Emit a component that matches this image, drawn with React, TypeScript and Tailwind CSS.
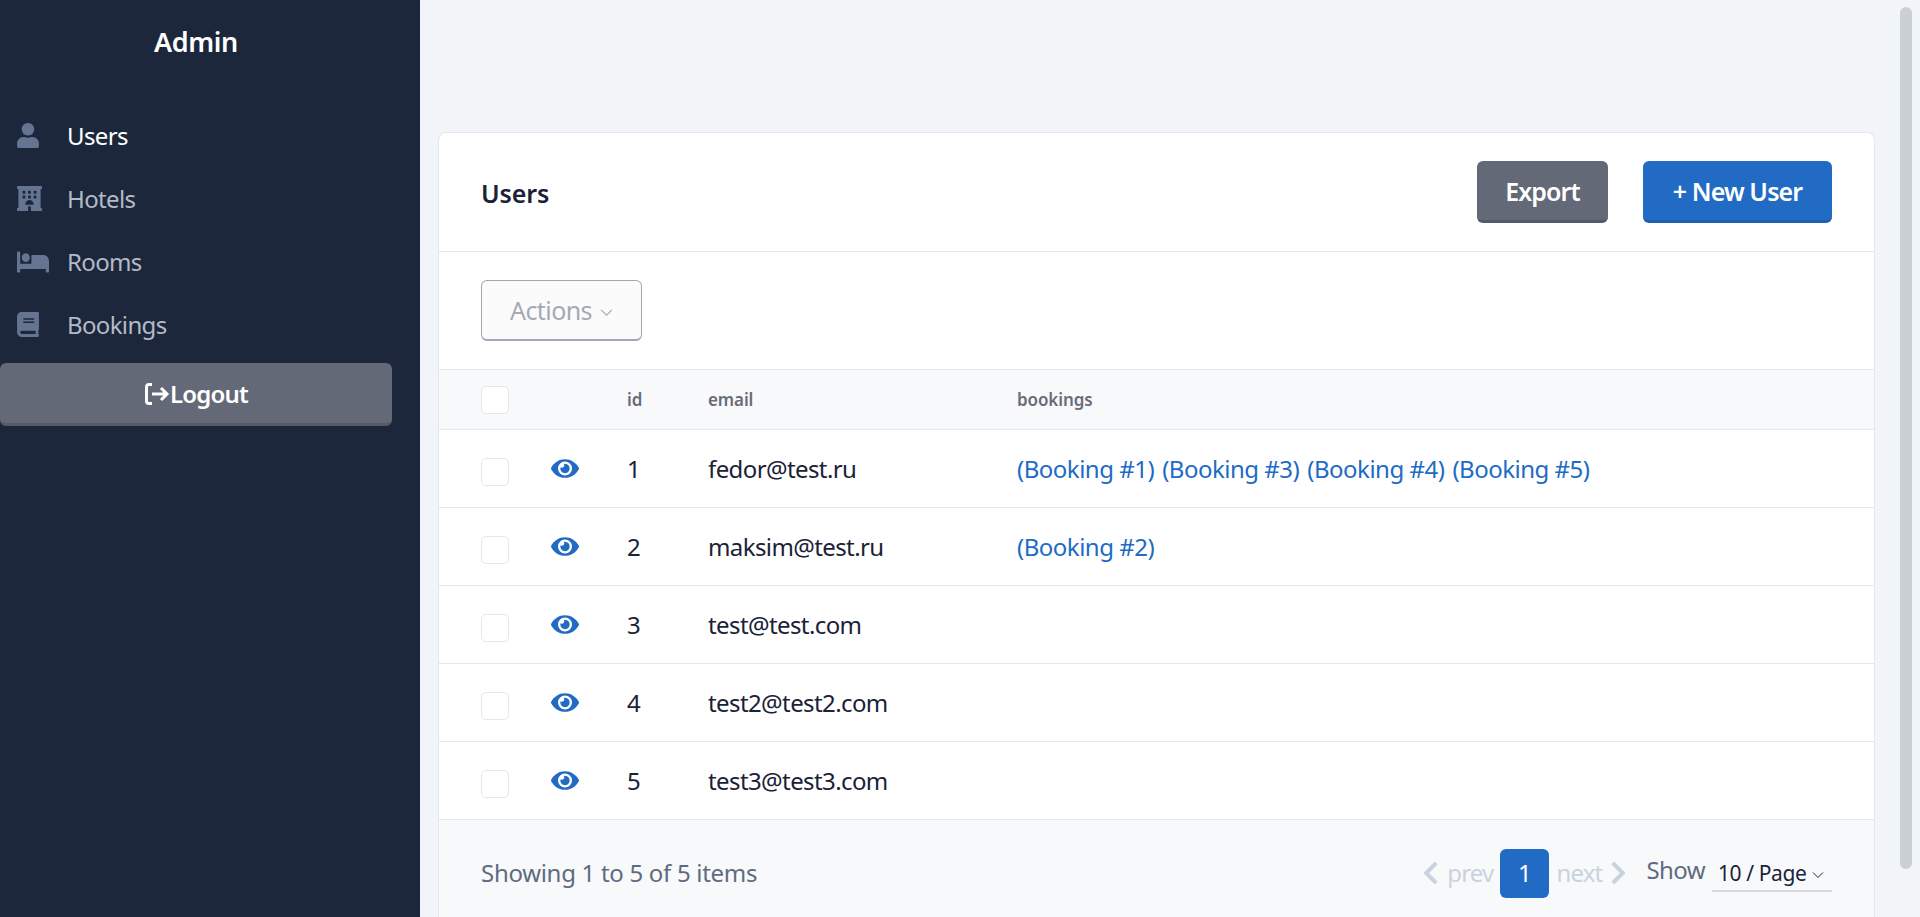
import React from 'react';
import { FaUser, FaHotel, FaBed, FaBook, FaEye, FaChevronLeft, FaChevronRight } from 'react-icons/fa';

const navItems = [
  { label: 'Users', icon: FaUser, active: true, iconClass: 'w-[22px] h-[25px]', stretch: false },
  { label: 'Hotels', icon: FaHotel, active: false, iconClass: 'w-[25px] h-[25px]', stretch: true },
  { label: 'Rooms', icon: FaBed, active: false, iconClass: 'w-[32px] h-[28px]', stretch: true },
  { label: 'Bookings', icon: FaBook, active: false, iconClass: 'w-[22px] h-[25px]', stretch: false },
];

const users = [
  { id: 1, email: 'fedor@test.ru', bookings: ['(Booking #1)', '(Booking #3)', '(Booking #4)', '(Booking #5)'] },
  { id: 2, email: 'maksim@test.ru', bookings: ['(Booking #2)'] },
  { id: 3, email: 'test@test.com', bookings: [] },
  { id: 4, email: 'test2@test2.com', bookings: [] },
  { id: 5, email: 'test3@test3.com', bookings: [] },
];

const Checkbox = () => (
  <div className="w-[28px] h-[28px] rounded-[5px] bg-white border border-[#e5e7eb]" />
);

const SmallChevron = ({ className }: { className: string }) => (
  <svg viewBox="0 0 12 8" fill="none" stroke="currentColor" strokeWidth="1" className={className}>
    <path d="M1 1.5l5 5 5-5" />
  </svg>
);

export default function App() {
  return (
    <div className="relative flex h-screen overflow-hidden bg-[#f1f4f9] font-['Noto_Sans','Open_Sans',sans-serif] text-[#1a2238]">
      <aside className="w-[420px] shrink-0 bg-[#1c273c]">
        <div className="h-[104px] pt-[22px] text-center text-[27px] leading-[40px] font-semibold text-white tracking-[-0.4px] pr-[28px]">
          Admin
        </div>
        <nav>
          {navItems.map(item => (
            <div key={item.label} className="flex items-center h-[63px] pl-[17px]">
              <div className="flex w-[50px] shrink-0">
                <item.icon
                  className={`${item.iconClass} text-[#657591]`}
                  preserveAspectRatio={item.stretch ? 'none' : undefined}
                />
              </div>
              <span className={`text-[24px] tracking-[-0.65px] ${item.active ? 'text-white' : 'text-[#b4bac6]'}`}>
                {item.label}
              </span>
            </div>
          ))}
        </nav>
        <button className="flex items-center justify-center w-[392px] h-[63px] mt-[7px] pt-[2px] rounded-[6px] bg-[#636976] border-b-[3px] border-[#545a67] text-white text-[24px] font-semibold tracking-[-0.8px]">
          <svg viewBox="0 0 26 24" fill="none" stroke="currentColor" strokeWidth="3" className="w-[26px] h-[24px]">
            <path d="M8 2.5H5C3.3 2.5 2.5 3.3 2.5 5v14c0 1.7.8 2.5 2.5 2.5h3" />
            <path d="M8 12h15M17 6l6 6-6 6" />
          </svg>
          Logout
        </button>
      </aside>

      <main className="flex-1 pt-[132px] pl-[18px] pr-[45px]">
        <div className="bg-white rounded-t-[8px] border border-[#e5e7eb] border-b-0 h-[800px]">
          <div className="flex items-center justify-between h-[119px] pl-[42px] pr-[42px] border-b border-[#e5e7eb]">
            <h1 className="pt-[3px] text-[25px] font-semibold tracking-[-0.1px]">Users</h1>
            <div className="flex gap-[35px]">
              <button className="w-[131px] h-[62px] pt-[2px] rounded-[6px] bg-[#636976] border-b-[3px] border-[#545a67] text-white text-[25px] font-semibold tracking-[-0.9px]">
                Export
              </button>
              <button className="w-[189px] h-[62px] pt-[2px] rounded-[6px] bg-[#216bc4] border-b-[3px] border-[#1f5fae] text-white text-[25px] font-semibold tracking-[-0.9px]">
                + New User
              </button>
            </div>
          </div>

          <div className="flex items-center h-[117px] pl-[42px]">
            <button className="flex items-center justify-center gap-[8px] w-[161px] h-[61px] pt-[2px] rounded-[6px] border border-[#a4a7b3] border-b-2 bg-[#fbfbfc] text-[#a6a9b5] text-[25px] tracking-[-0.6px]">
              Actions
              <SmallChevron className="w-[13px] h-[9px] mt-[3px]" />
            </button>
          </div>

          <div className="flex items-center h-[61px] pl-[42px] bg-[#f8f9fb] border-y border-[#e5e7eb] text-[#686d78] text-[17px] font-semibold tracking-[-0.1px]">
            <div className="w-[70px]"><Checkbox /></div>
            <div className="w-[76px]" />
            <div className="w-[81px]">id</div>
            <div className="w-[309px]">email</div>
            <div>bookings</div>
          </div>

          {users.map(user => (
            <div key={user.id} className="flex items-center h-[78px] pl-[42px] border-b border-[#e5e7eb] text-[24px] tracking-[-0.5px]">
              <div className="w-[70px] pt-[6px]"><Checkbox /></div>
              <div className="w-[76px]"><FaEye className="w-[28px] h-[25px] text-[#216bc4]" /></div>
              <div className="w-[81px]">{user.id}</div>
              <div className="w-[309px] tracking-[-0.6px]">{user.email}</div>
              <div className="flex gap-[8px] text-[#216bc4]">
                {user.bookings.map(b => <a key={b}>{b}</a>)}
              </div>
            </div>
          ))}

          <div className="flex items-center justify-between h-[200px] pl-[42px] pr-[42px] pb-[94px] bg-[#f8f9fb]">
            <span className="text-[24px] text-[#5f6b80] tracking-[-0.3px]">Showing 1 to 5 of 5 items</span>
            <div className="flex items-center">
              <div className="flex items-center gap-[8px] text-[#c9d3e0] text-[24px] tracking-[-0.8px]">
                <FaChevronLeft className="w-[17px] h-[26px]" />
                <span className="mr-[7px]">prev</span>
              </div>
              <div className="flex items-center justify-center w-[49px] h-[49px] rounded-[6px] bg-[#216bc4] text-white text-[24px]">1</div>
              <div className="flex items-center gap-[8px] ml-[7px] text-[#c9d3e0] text-[24px] tracking-[-0.8px]">
                <span>next</span>
                <FaChevronRight className="w-[17px] h-[26px]" />
              </div>
              <span className="ml-[19px] pb-[6px] text-[24px] text-[#5f6b80] tracking-[-0.6px]">Show</span>
              <div className="flex items-center gap-[6px] ml-[7px] w-[120px] h-[37px] pl-[6px] pt-[4px] border-b-2 border-[#d5d8de] text-[21px] tracking-[-0.4px]">
                10 / Page
                <SmallChevron className="w-[12px] h-[8px] mt-[2px]" />
              </div>
            </div>
          </div>
        </div>
      </main>

      <div className="absolute top-[7px] left-[1900px] w-[12px] h-[862px] rounded-full bg-[#cbcfd6]" />
    </div>
  );
}
